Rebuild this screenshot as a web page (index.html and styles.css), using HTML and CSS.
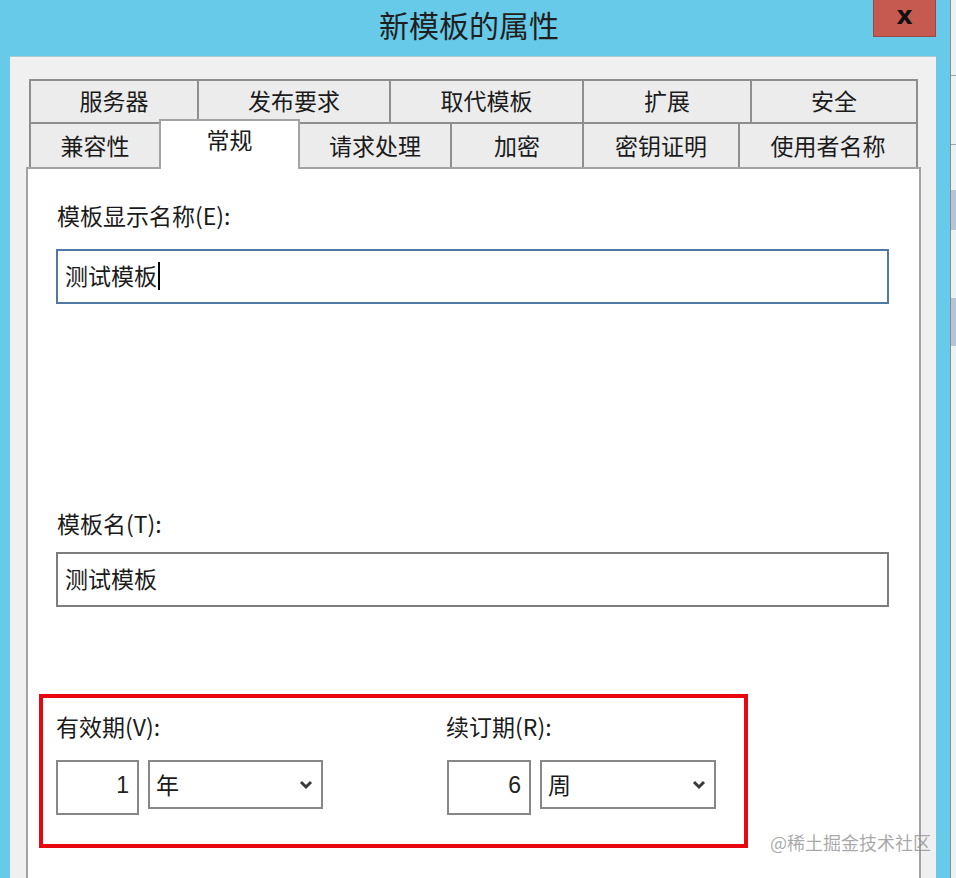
FILE: index.html
```html
<!DOCTYPE html>
<html lang="zh-CN">
<head>
<meta charset="utf-8">
<title>新模板的属性</title>
<link rel="stylesheet" href="styles.css">
</head>
<body>
<div class="screen">
  <div class="window">
    <div class="titlebar">
      <div class="title">新模板的属性</div>
      <div class="close">x</div>
    </div>
    <div class="client">
      <div class="tabs">
        <div class="row row1">
          <div class="tab" style="width:170px">服务器</div>
          <div class="tab" style="width:194px">发布要求</div>
          <div class="tab" style="width:195px">取代模板</div>
          <div class="tab" style="width:170px">扩展</div>
          <div class="tab" style="width:168px">安全</div>
        </div>
        <div class="row row2">
          <div class="tab" style="width:132px">兼容性</div>
          <div class="tab active" style="width:141px">常规</div>
          <div class="tab" style="width:154px">请求处理</div>
          <div class="tab" style="width:134px">加密</div>
          <div class="tab" style="width:158px">密钥证明</div>
          <div class="tab" style="width:180px">使用者名称</div>
        </div>
      </div>
      <div class="panel">
        <div class="label first">模板显示名称(E):</div>
        <div class="input focused"><span>测试模板</span><span class="caret"></span></div>
        <div class="label second">模板名(T):</div>
        <div class="input">测试模板</div>
        <div class="highlight">
          <div class="group">
            <div class="label">有效期(V):</div>
            <div class="controls">
              <div class="num">1</div>
              <div class="select">
                <span>年</span>
                <svg class="chev" width="14" height="10" viewBox="0 0 14 10"><polyline points="2,2 7,7 12,2" fill="none" stroke="#3a3a3a" stroke-width="3"/></svg>
              </div>
            </div>
          </div>
          <div class="group">
            <div class="label">续订期(R):</div>
            <div class="controls">
              <div class="num wide">6</div>
              <div class="select wide">
                <span>周</span>
                <svg class="chev" width="14" height="10" viewBox="0 0 14 10"><polyline points="2,2 7,7 12,2" fill="none" stroke="#3a3a3a" stroke-width="3"/></svg>
              </div>
            </div>
          </div>
        </div>
      </div>
    </div>
  </div>
  <div class="behind">
    <div class="bline l1"></div>
    <div class="bblock b1"></div>
    <div class="bline l2"></div>
    <div class="bblock b2"></div>
  </div>
  <div class="watermark">@稀土掘金技术社区</div>
</div>
</body>
</html>
```
FILE: styles.css
```css
* { box-sizing: border-box; }
html, body { margin: 0; padding: 0; }
body {
  width: 956px;
  height: 878px;
  overflow: hidden;
  background: #66cae8;
  font-family: "Noto Sans CJK SC", "Noto Sans", sans-serif;
  color: #1b1b1b;
}
.screen {
  position: relative;
  width: 956px;
  height: 878px;
  display: flex;
}
.window {
  width: 950px;
  height: 878px;
  display: flex;
  flex-direction: column;
}
.titlebar {
  position: relative;
  height: 56px;
  display: flex;
  justify-content: center;
  padding-right: 12px;
}
.title {
  font-size: 30px;
  line-height: 48px;
  color: #1f1f1f;
}
.close {
  position: absolute;
  left: 873px;
  top: 0;
  width: 63px;
  height: 37px;
  background: #c65a50;
  border: 1px solid #9a4a42;
  border-top: none;
  color: #111;
  font-family: "DejaVu Sans", sans-serif;
  font-weight: bold;
  font-size: 25px;
  line-height: 31px;
  text-align: center;
}
.client {
  margin-left: 10px;
  width: 926px;
  flex: 1;
  background: #f0f0f0;
  border-top: 1px solid #b4c8d2;
  padding-top: 22px;
  overflow: hidden;
}
.tabs {
  margin-left: 19px;
}
.row {
  display: flex;
}
.tab {
  display: flex;
  align-items: center;
  justify-content: center;
  font-size: 23px;
  color: #1b1b1b;
  background: #ececec;
  border: 2px solid #8e8e8e;
  margin-left: -2px;
}
.tab:first-child { margin-left: 0; }
.row1 .tab {
  height: 45px;
  padding-bottom: 4px;
}
.row2 {
  margin-top: -2px;
  height: 45px;
}
.row2 .tab {
  height: 45px;
  border-bottom: none;
  padding-bottom: 2px;
}
.row2 .tab.active {
  position: relative;
  z-index: 2;
  background: #ffffff;
  border-color: #a3a3a3;
  margin-top: -3px;
  height: 50px;
  padding-top: 0;
  padding-bottom: 12px;
}
.panel {
  margin-left: 16px;
  width: 895px;
  height: 720px;
  background: #ffffff;
  border: 2px solid #a3a3a3;
  padding-left: 28px;
  padding-top: 31px;
}
.label {
  font-size: 23px;
  line-height: 30px;
  padding-left: 1px;
  color: #1b1b1b;
}
.label.second { margin-top: 204px; }
.input {
  margin-top: 19px;
  width: 833px;
  height: 55px;
  border: 2px solid #7d7d7d;
  display: flex;
  align-items: center;
  padding-left: 7px;
  padding-bottom: 4px;
  font-size: 23px;
  color: #1b1b1b;
}
.label.second + .input { margin-top: 14px; }
.input.focused { border-color: #5079a6; }
.caret {
  display: inline-block;
  width: 2px;
  height: 28px;
  background: #000;
  margin-left: 1px;
  margin-top: 3px;
}
.highlight {
  margin-top: 87px;
  margin-left: -17px;
  width: 709px;
  height: 154px;
  border: 4px solid #e8060f;
  padding: 13px 0 0 13px;
  display: flex;
}
.group {
  flex: none;
  width: 390px;
  display: flex;
  flex-direction: column;
}
.group + .group { width: 280px; }
.group .label { padding-left: 0; }
.controls {
  margin-top: 19px;
  display: flex;
  align-items: flex-start;
}
.num {
  width: 83px;
  height: 55px;
  border: 2px solid #878787;
  font-family: "Liberation Sans", sans-serif;
  font-size: 23px;
  text-align: right;
  padding-right: 8px;
  line-height: 46px;
  color: #222;
}
.num.wide { width: 84px; margin-left: 1px; }
.select {
  margin-left: 9px;
  width: 175px;
  height: 49px;
  border: 2px solid #878787;
  display: flex;
  align-items: center;
  justify-content: space-between;
  padding: 0 8px 0 6px;
  font-size: 23px;
  color: #1b1b1b;
}
.select span { margin-top: -2px; }
.select.wide { width: 176px; }
.chev { display: block; }
.behind {
  position: absolute;
  left: 950px;
  top: 0;
  width: 6px;
  height: 878px;
  background: #eef1f4;
  border-left: 1px solid #8a8a8a;
}
.bline { position: absolute; left: 0; width: 6px; height: 1px; background: #9aa6b2; }
.l1 { top: 75px; }
.l2 { top: 144px; }
.bblock { position: absolute; left: 0; width: 6px; background: #b8c4d6; }
.b1 { top: 190px; height: 40px; }
.b2 { top: 298px; height: 48px; }
.watermark {
  position: absolute;
  left: 770px;
  top: 829px;
  font-size: 18px;
  line-height: 26px;
  color: rgba(140, 140, 140, 0.75);
}
```
